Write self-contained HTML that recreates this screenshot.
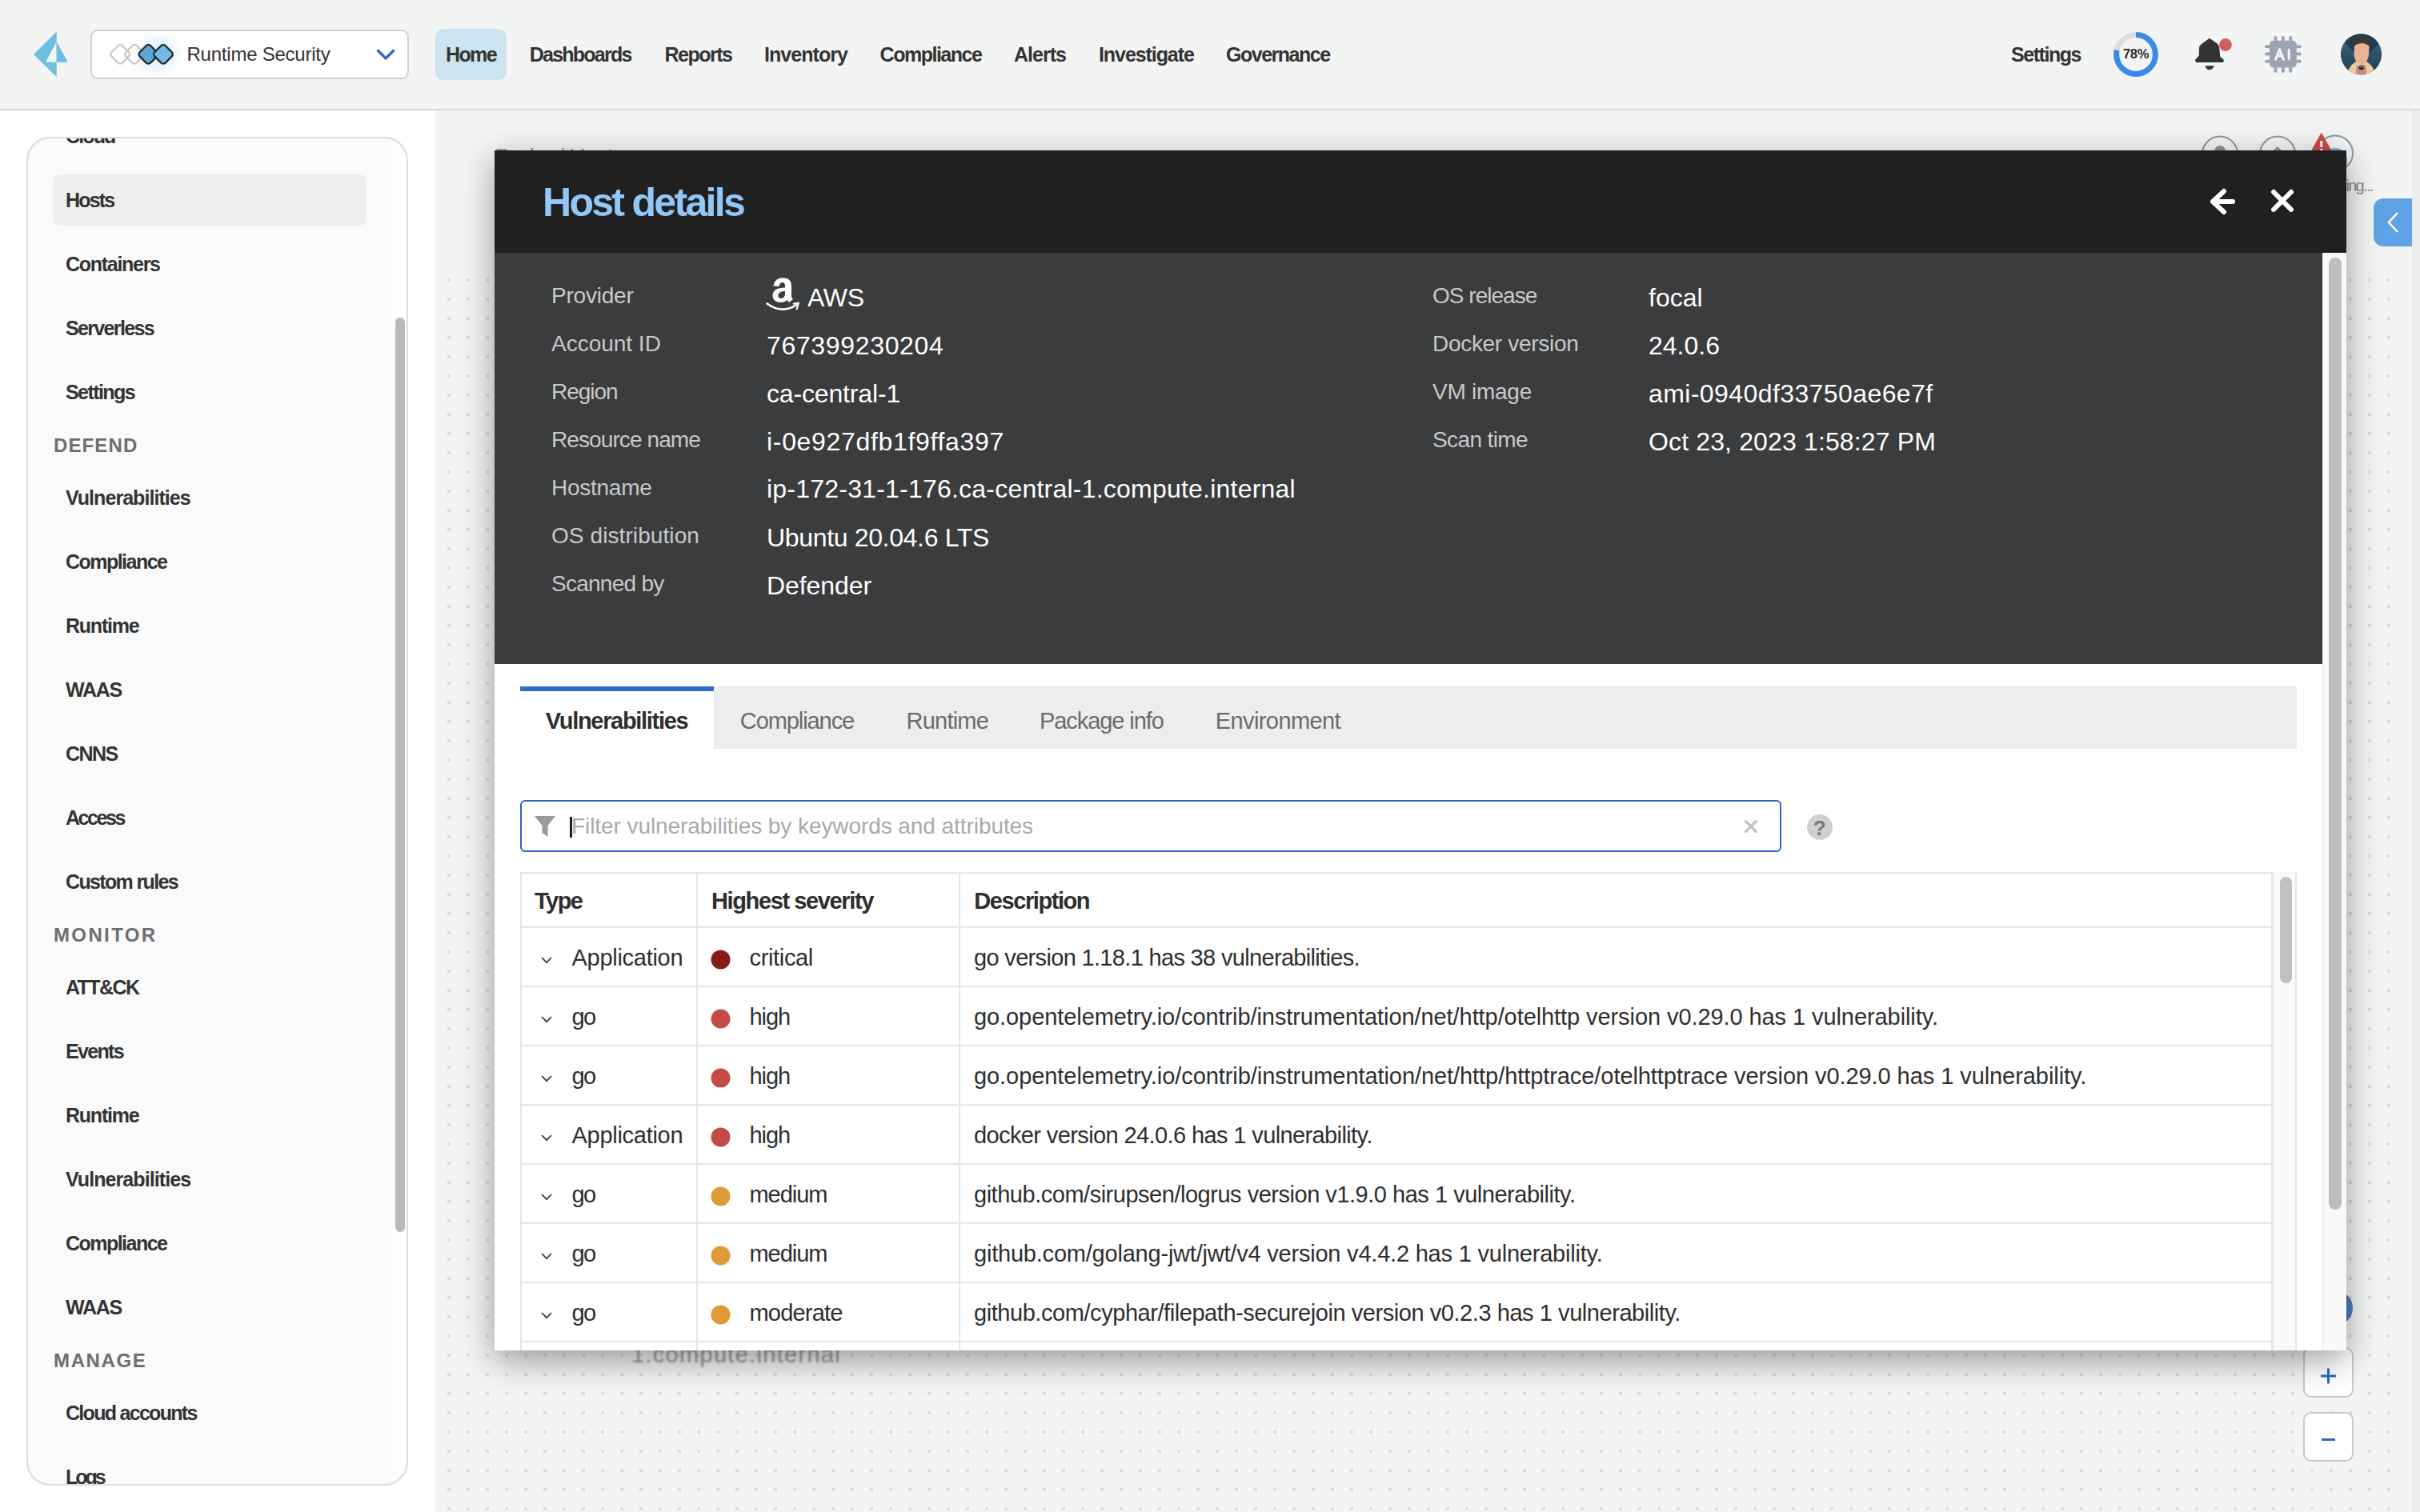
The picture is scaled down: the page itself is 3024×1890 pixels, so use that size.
<!DOCTYPE html>
<html><head><meta charset="utf-8"><title>Host details</title>
<style>
html,body{margin:0;padding:0;}
body{width:3024px;height:1890px;overflow:hidden;position:relative;background:#fff;font-family:"Liberation Sans",sans-serif;}
.a{position:absolute;box-sizing:border-box;}
.t{position:absolute;line-height:1;white-space:nowrap;}
svg{position:absolute;overflow:visible;}
</style></head><body>

<svg style="left:0;top:0" width="3024" height="1890"><defs><pattern id="dots" x="0" y="0" width="24" height="24" patternUnits="userSpaceOnUse"><rect x="7" y="12" width="4" height="4" fill="#dfdcdc"/></pattern></defs><rect x="544" y="138" width="2470" height="1752" fill="#f3f5f5"/><rect x="544" y="340" width="2456" height="1550" fill="url(#dots)"/><rect x="3014" y="138" width="10" height="1752" fill="#ebebeb"/></svg>
<div class="t " style="left:618.0px;top:181.8px;font-size:28px;color:#9c9c9c;letter-spacing:-0.78px;">Radar / Hosts</div>
<div class="t " style="left:789.0px;top:1678.5px;font-size:29px;color:#949494;letter-spacing:1.30px;filter:blur(0.9px);">1.compute.internal</div>
<svg style="left:2740px;top:160px" width="220" height="70"><circle cx="34" cy="32.5" r="22" fill="none" stroke="#8f9699" stroke-width="2"/><circle cx="106" cy="32.5" r="22" fill="none" stroke="#8f9699" stroke-width="2"/><circle cx="178" cy="31.5" r="22" fill="none" stroke="#8f9699" stroke-width="2"/><circle cx="34" cy="29" r="7" fill="#8f9699"/><path d="M100 31 L106 25 L112 31" fill="none" stroke="#8f9699" stroke-width="3"/><circle cx="178" cy="40" r="15" fill="#74aee6"/><path d="M168 34 Q178 24 188 34" fill="none" stroke="#8f9699" stroke-width="2.5"/><polygon points="160.8,7.4 148.3,30 173.3,30" fill="#c94a46" stroke="#c94a46" stroke-width="2" stroke-linejoin="round"/><rect x="159.3" y="16" width="3" height="8" fill="#fff"/><rect x="159.3" y="26" width="3" height="3" fill="#fff"/></svg>
<div class="t " style="left:2931.5px;top:221.6px;font-size:20px;color:#8a8a8a;letter-spacing:-1.73px;">ing...</div>
<div class="a" style="left:2966px;top:248px;width:48px;height:60px;background:#5fa3e6;border-radius:12px 0 0 12px;"></div>
<svg style="left:2966px;top:248px" width="48" height="60"><polyline points="30,18 19,30 30,42" fill="none" stroke="#fff" stroke-width="2.5"/></svg>
<svg style="left:2900px;top:1600px" width="60" height="70"><circle cx="18" cy="35" r="22" fill="#4a7cc4"/></svg>
<div class="a" style="left:2878px;top:1684px;width:63px;height:63px;background:#fff;border:2px solid #c9c9c9;border-radius:10px;"></div>
<div class="a" style="left:2878px;top:1765px;width:63px;height:62px;background:#fff;border:2px solid #c9c9c9;border-radius:10px;"></div>
<svg style="left:2878px;top:1684px" width="63" height="150"><path d="M22 36H41M31.5 26.5V45.5" stroke="#3568c0" stroke-width="3"/><path d="M23 115.5H40" stroke="#3568c0" stroke-width="3"/></svg>
<div class="a" style="left:0px;top:0px;width:3024px;height:138px;background:#f3f5f5;border-bottom:2px solid #d8dada;"></div>
<svg style="left:0;top:0" width="100" height="110"><polygon points="42,68 70.7,39.5 70.7,96.3" fill="#6cbfe0"/><polygon points="57,77.7 70.7,52 70.7,77.7" fill="#f3f5f5"/><polygon points="70.7,52 84.8,77.7 70.7,77.7" fill="#6cbfe0"/></svg>
<div class="a" style="left:113px;top:37px;width:398px;height:62px;background:#fff;border:2px solid #d0d2d2;border-radius:9px;"></div>
<svg style="left:0;top:0" width="240" height="110"><defs><radialGradient id="glow"><stop offset="0" stop-color="#a8d8f4" stop-opacity=".55"/><stop offset="1" stop-color="#9fd3f2" stop-opacity="0"/></radialGradient></defs><ellipse cx="196" cy="68" rx="34" ry="28" fill="url(#glow)"/><rect x="140.7" y="58.3" width="19" height="19" rx="4" transform="rotate(45 150.2 67.8)" fill="none" stroke="#c3c8d0" stroke-width="2.2"/><rect x="158.5" y="58.3" width="19" height="19" rx="4" transform="rotate(45 168 67.8)" fill="none" stroke="#c3c8d0" stroke-width="2.2"/><rect x="175.9" y="58.3" width="19" height="19" rx="4" transform="rotate(45 185.4 67.8)" fill="#5aa6d6" stroke="#1e2226" stroke-width="2.2"/><rect x="194.5" y="58.3" width="19" height="19" rx="4" transform="rotate(45 204 67.8)" fill="#72b9e3" stroke="#1e2226" stroke-width="2.2"/></svg>
<div class="t " style="left:233.5px;top:56.4px;font-size:24px;color:#333;letter-spacing:-0.23px;">Runtime Security</div>
<svg style="left:465px;top:55px" width="34" height="26"><polyline points="6.5,7.5 17,18 27.5,7.5" fill="none" stroke="#2b66c9" stroke-width="3.2"/></svg>
<div class="a" style="left:544px;top:36px;width:89px;height:64px;background:#cde4f0;border-radius:10px;"></div>
<div class="t " style="left:557.0px;top:55.8px;font-size:25px;color:#333;font-weight:700;letter-spacing:-1.61px;">Home</div>
<div class="t " style="left:661.7px;top:55.8px;font-size:25px;color:#333;font-weight:700;letter-spacing:-1.75px;">Dashboards</div>
<div class="t " style="left:830.5px;top:55.8px;font-size:25px;color:#333;font-weight:700;letter-spacing:-1.49px;">Reports</div>
<div class="t " style="left:955.0px;top:55.8px;font-size:25px;color:#333;font-weight:700;letter-spacing:-0.95px;">Inventory</div>
<div class="t " style="left:1099.6px;top:55.8px;font-size:25px;color:#333;font-weight:700;letter-spacing:-1.49px;">Compliance</div>
<div class="t " style="left:1267.0px;top:55.8px;font-size:25px;color:#333;font-weight:700;letter-spacing:-0.98px;">Alerts</div>
<div class="t " style="left:1373.0px;top:55.8px;font-size:25px;color:#333;font-weight:700;letter-spacing:-1.08px;">Investigate</div>
<div class="t " style="left:1532.0px;top:55.8px;font-size:25px;color:#333;font-weight:700;letter-spacing:-1.49px;">Governance</div>
<div class="t " style="left:2513.0px;top:55.8px;font-size:25px;color:#333;font-weight:700;letter-spacing:-1.45px;">Settings</div>
<svg style="left:2639px;top:38px" width="60" height="60"><circle cx="30" cy="30" r="24.4" fill="none" stroke="#dedede" stroke-width="7"/><circle cx="30" cy="30" r="24.4" fill="none" stroke="#3b89e8" stroke-width="7" stroke-dasharray="119.58 153.31" transform="rotate(-90 30 30)"/></svg>
<div class="t " style="left:2653.0px;top:59.1px;font-size:16.5px;color:#2a2a2a;font-weight:700;letter-spacing:-0.34px;">78%</div>
<svg style="left:2735px;top:40px" width="60" height="55"><path d="M25.9 8.2 L14.6 16.7 C13.8 18 13.5 19 13.5 20.4 L13.1 29.8 L8.7 34.6 L9.1 37.5 L42.9 37.5 L43.3 34.9 L38.6 30.2 L37.8 19.7 C37.6 18 37 16.5 36 15.3 Z" fill="#333" stroke="#333" stroke-width="1" stroke-linejoin="round"/><path d="M20.4 42.2 H31.7 C30.5 45.5 28.5 47.3 25.9 47.3 C23.3 47.3 21.5 45.5 20.4 42.2Z" fill="#333"/><circle cx="46" cy="16" r="7.9" fill="#d0605b"/></svg>
<svg style="left:2820px;top:40px" width="66" height="56"><g fill="#9ca4b2"><rect x="16" y="10.7" width="33.8" height="33.9" rx="5"/><rect x="21.5" y="5" width="4" height="7" rx="2"/><rect x="21.5" y="43.5" width="4" height="7.5" rx="2"/><rect x="30.9" y="5" width="4" height="7" rx="2"/><rect x="30.9" y="43.5" width="4" height="7.5" rx="2"/><rect x="40.2" y="5" width="4" height="7" rx="2"/><rect x="40.2" y="43.5" width="4" height="7.5" rx="2"/><rect x="10" y="16.2" width="7" height="4" rx="2"/><rect x="48.8" y="16.2" width="7" height="4" rx="2"/><rect x="10" y="25.5" width="7" height="4" rx="2"/><rect x="48.8" y="25.5" width="7" height="4" rx="2"/><rect x="10" y="34.7" width="7" height="4" rx="2"/><rect x="48.8" y="34.7" width="7" height="4" rx="2"/></g><path d="M23.6 34.3 L28.5 21.8 L33.4 34.3 M25.3 30 H31.7" fill="none" stroke="#f5f6f7" stroke-width="3.1" stroke-linejoin="round" stroke-linecap="round"/><rect x="38.7" y="20.4" width="3.1" height="14.5" rx="1.5" fill="#f5f6f7"/></svg>
<svg style="left:2915px;top:35px" width="70" height="66"><defs><clipPath id="av"><circle cx="35.5" cy="32.8" r="25.6"/></clipPath><linearGradient id="avg" x1="0" y1="0" x2="0" y2="1"><stop offset="0" stop-color="#3f7291"/><stop offset="1" stop-color="#1d3442"/></linearGradient></defs><g clip-path="url(#av)"><rect x="0" y="0" width="70" height="66" fill="url(#avg)"/><polygon points="14.2,17.6 37.4,40.8 57.2,19.8 50,8 36,6 22,9" fill="#1c3341" opacity=".8"/><path d="M27 24 C27 16 31 13.5 36 13.5 C42 13.5 45.5 17 45.5 24 L45 33 C44 41 40 47 35.7 47 C31 47 27.5 41 26.5 33 Z" fill="#e7b596"/><path d="M25.8 24 C26 15 31 12.5 36.5 12.5 C41 12.5 45.5 15 46 23 L43 21 C40 19 34 18.5 29 21 Z" fill="#4a3328"/><path d="M18 60 C19 50 24 44 30 42 L35.7 50 L41.5 42 C47 44 52 50 53.3 60 Z" fill="#eccba3"/><path d="M28 60 L30 46 L35.7 50 L41 46 L43 60 Z" fill="#c68a82"/><path d="M32 47 L35.7 50.5 L39.5 47 L38 52 L33.5 52 Z" fill="#111"/></g></svg>
<div class="a" style="left:33px;top:171px;width:477px;height:1686px;background:#fafafa;border:2px solid #dcdddd;border-radius:30px;overflow:hidden;"></div>
<div class="a" style="left:33px;top:171px;width:477px;height:1685px;border-radius:30px;overflow:hidden;">
<div class="a" style="left:457px;top:0;width:20px;height:1685px;background:#fdfdfd;"></div>
<div class="a" style="left:461px;top:226px;width:12px;height:1143px;background:#b9b9b9;border-radius:6px;"></div>
<div class="a" style="left:33px;top:47px;width:392px;height:64px;background:#efefef;border-radius:8px;"></div>
<div class="t" style="left:49.0px;top:-13.2px;font-size:25px;color:#333;font-weight:700;letter-spacing:-1.86px;">Cloud</div>
<div class="t" style="left:49.0px;top:66.8px;font-size:25px;color:#333;font-weight:700;letter-spacing:-1.81px;">Hosts</div>
<div class="t" style="left:49.0px;top:146.8px;font-size:25px;color:#333;font-weight:700;letter-spacing:-1.29px;">Containers</div>
<div class="t" style="left:49.0px;top:226.8px;font-size:25px;color:#333;font-weight:700;letter-spacing:-1.65px;">Serverless</div>
<div class="t" style="left:49.0px;top:306.8px;font-size:25px;color:#333;font-weight:700;letter-spacing:-1.58px;">Settings</div>
<div class="t" style="left:34.0px;top:373.7px;font-size:24px;color:#6e6e6e;font-weight:700;letter-spacing:1.12px;">DEFEND</div>
<div class="t" style="left:49.0px;top:438.8px;font-size:25px;color:#333;font-weight:700;letter-spacing:-0.95px;">Vulnerabilities</div>
<div class="t" style="left:49.0px;top:518.8px;font-size:25px;color:#333;font-weight:700;letter-spacing:-1.53px;">Compliance</div>
<div class="t" style="left:49.0px;top:598.8px;font-size:25px;color:#333;font-weight:700;letter-spacing:-1.23px;">Runtime</div>
<div class="t" style="left:49.0px;top:678.8px;font-size:25px;color:#333;font-weight:700;letter-spacing:-1.25px;">WAAS</div>
<div class="t" style="left:49.0px;top:758.8px;font-size:25px;color:#333;font-weight:700;letter-spacing:-1.55px;">CNNS</div>
<div class="t" style="left:49.0px;top:838.8px;font-size:25px;color:#333;font-weight:700;letter-spacing:-2.43px;">Access</div>
<div class="t" style="left:49.0px;top:918.8px;font-size:25px;color:#333;font-weight:700;letter-spacing:-1.65px;">Custom rules</div>
<div class="t" style="left:34.0px;top:985.7px;font-size:24px;color:#6e6e6e;font-weight:700;letter-spacing:2.37px;">MONITOR</div>
<div class="t" style="left:49.0px;top:1050.8px;font-size:25px;color:#333;font-weight:700;letter-spacing:-1.58px;">ATT&amp;CK</div>
<div class="t" style="left:49.0px;top:1130.8px;font-size:25px;color:#333;font-weight:700;letter-spacing:-1.66px;">Events</div>
<div class="t" style="left:49.0px;top:1210.8px;font-size:25px;color:#333;font-weight:700;letter-spacing:-1.23px;">Runtime</div>
<div class="t" style="left:49.0px;top:1290.8px;font-size:25px;color:#333;font-weight:700;letter-spacing:-0.92px;">Vulnerabilities</div>
<div class="t" style="left:49.0px;top:1370.8px;font-size:25px;color:#333;font-weight:700;letter-spacing:-1.53px;">Compliance</div>
<div class="t" style="left:49.0px;top:1450.8px;font-size:25px;color:#333;font-weight:700;letter-spacing:-1.25px;">WAAS</div>
<div class="t" style="left:34.0px;top:1517.7px;font-size:24px;color:#6e6e6e;font-weight:700;letter-spacing:1.64px;">MANAGE</div>
<div class="t" style="left:49.0px;top:1582.8px;font-size:25px;color:#333;font-weight:700;letter-spacing:-1.71px;">Cloud accounts</div>
<div class="t" style="left:49.0px;top:1662.8px;font-size:25px;color:#333;font-weight:700;letter-spacing:-3.05px;">Logs</div>
</div>
<div class="a" style="left:33px;top:171px;width:477px;height:1686px;border:2px solid #dcdddd;border-radius:30px;"></div>
<div class="a" style="left:618px;top:188px;width:2314px;height:1500px;background:#fff;box-shadow:0 12px 40px rgba(0,0,0,.38);"></div>
<div class="a" style="left:0;top:0;width:3024px;height:1890px;clip-path:inset(188px 92px 202px 618px);">
<div class="a" style="left:618px;top:188px;width:2314px;height:128px;background:#202020;"></div>
<div class="t " style="left:678.0px;top:227.7px;font-size:50px;color:#92c7f7;font-weight:700;letter-spacing:-2.70px;">Host details</div>
<svg style="left:2755px;top:230px" width="120" height="45"><path d="M24 9 L10 22 L24 35 M10.5 22 H35" fill="none" stroke="#fff" stroke-width="6" stroke-linecap="round" stroke-linejoin="round"/><path d="M86 10 L108 32 M108 10 L86 32" fill="none" stroke="#fff" stroke-width="6" stroke-linecap="round"/></svg>
<div class="a" style="left:618px;top:316px;width:2284px;height:514px;background:#3b3c3e;"></div>
<div class="a" style="left:2902px;top:316px;width:30px;height:1372px;background:#f9f9f9;border-left:1.5px solid #e6e6e6;"></div>
<div class="a" style="left:2910px;top:322px;width:16px;height:1190px;background:#bebebe;border-radius:8px;"></div>
<div class="t " style="left:689.0px;top:356.3px;font-size:28px;color:#c8c8c8;letter-spacing:-0.22px;">Provider</div>
<div class="t " style="left:1009.0px;top:355.9px;font-size:32px;color:#fff;letter-spacing:-0.33px;">AWS</div>
<div class="t " style="left:689.0px;top:416.3px;font-size:28px;color:#c8c8c8;letter-spacing:-0.01px;">Account ID</div>
<div class="t " style="left:958.0px;top:415.9px;font-size:32px;color:#fff;letter-spacing:0.66px;">767399230204</div>
<div class="t " style="left:689.0px;top:476.3px;font-size:28px;color:#c8c8c8;letter-spacing:-1.03px;">Region</div>
<div class="t " style="left:958.0px;top:475.9px;font-size:32px;color:#fff;letter-spacing:-0.16px;">ca-central-1</div>
<div class="t " style="left:689.0px;top:536.3px;font-size:28px;color:#c8c8c8;letter-spacing:-0.90px;">Resource name</div>
<div class="t " style="left:958.0px;top:535.9px;font-size:32px;color:#fff;letter-spacing:0.68px;">i-0e927dfb1f9ffa397</div>
<div class="t " style="left:689.0px;top:596.3px;font-size:28px;color:#c8c8c8;letter-spacing:-0.26px;">Hostname</div>
<div class="t " style="left:958.0px;top:595.4px;font-size:32px;color:#fff;letter-spacing:0.22px;">ip-172-31-1-176.ca-central-1.compute.internal</div>
<div class="t " style="left:689.0px;top:656.3px;font-size:28px;color:#c8c8c8;letter-spacing:0.09px;">OS distribution</div>
<div class="t " style="left:958.0px;top:655.9px;font-size:32px;color:#fff;letter-spacing:-0.34px;">Ubuntu 20.04.6 LTS</div>
<div class="t " style="left:689.0px;top:716.3px;font-size:28px;color:#c8c8c8;letter-spacing:-0.74px;">Scanned by</div>
<div class="t " style="left:958.0px;top:715.9px;font-size:32px;color:#fff;letter-spacing:-0.08px;">Defender</div>
<svg style="left:940px;top:330px" width="70" height="65"><path fill-rule="evenodd" fill="#fff" d="M26.5 27.5 C27.5 20.5 32 17.3 38.5 17.3 C45.5 17.3 49 21 49 27.5 L49 40.5 C49 42 50 43 51 44 L46 48 C45 47 44 46 43.5 45 C41.5 47.2 38.5 48 35.5 48 C29.5 48 25.5 44.5 25.5 39.5 C25.5 33 31 29.5 41 29.5 L41 27.5 C41 24.5 40 23 38 23 C35.5 23 34 24.5 33.5 28 Z M41 34 C34.5 34 32.5 36.5 32.5 39.5 C32.5 42 34 43 36 43 C39.5 43 41 40 41 37 Z"/><path d="M18.5 49.5 Q37 63 55.5 51" fill="none" stroke="#fff" stroke-width="2.6" stroke-linecap="round"/><path d="M51.5 49.8 L58 48.4 L55.6 56.5" fill="none" stroke="#fff" stroke-width="2" stroke-linecap="round" stroke-linejoin="round"/></svg>
<div class="t " style="left:1790.0px;top:356.3px;font-size:28px;color:#c8c8c8;letter-spacing:-0.98px;">OS release</div>
<div class="t " style="left:2060.0px;top:355.9px;font-size:32px;color:#fff;">focal</div>
<div class="t " style="left:1790.0px;top:416.3px;font-size:28px;color:#c8c8c8;letter-spacing:-0.30px;">Docker version</div>
<div class="t " style="left:2060.0px;top:415.9px;font-size:32px;color:#fff;">24.0.6</div>
<div class="t " style="left:1790.0px;top:476.3px;font-size:28px;color:#c8c8c8;letter-spacing:-0.26px;">VM image</div>
<div class="t " style="left:2060.0px;top:475.9px;font-size:32px;color:#fff;letter-spacing:0.41px;">ami-0940df33750ae6e7f</div>
<div class="t " style="left:1790.0px;top:536.3px;font-size:28px;color:#c8c8c8;letter-spacing:-0.61px;">Scan time</div>
<div class="t " style="left:2060.0px;top:536.4px;font-size:32px;color:#fff;letter-spacing:0.14px;">Oct 23, 2023 1:58:27 PM</div>
<div class="a" style="left:650px;top:858px;width:2220px;height:78px;background:#ededed;"></div>
<div class="a" style="left:650px;top:858px;width:242px;height:78px;background:#fff;border-top:6px solid #2f6fc9;"></div>
<div class="t " style="left:681.8px;top:886.5px;font-size:29px;color:#2e2e2e;font-weight:700;letter-spacing:-1.31px;">Vulnerabilities</div>
<div class="t " style="left:924.8px;top:886.5px;font-size:29px;color:#6b6b6b;letter-spacing:-1.08px;">Compliance</div>
<div class="t " style="left:1132.5px;top:886.5px;font-size:29px;color:#6b6b6b;letter-spacing:-0.77px;">Runtime</div>
<div class="t " style="left:1299.0px;top:886.5px;font-size:29px;color:#6b6b6b;letter-spacing:-1.08px;">Package info</div>
<div class="t " style="left:1518.8px;top:886.5px;font-size:29px;color:#6b6b6b;letter-spacing:-0.60px;">Environment</div>
<div class="a" style="left:650px;top:1000px;width:1576px;height:65px;background:#fff;border:2.5px solid #2c63c6;border-radius:6px;"></div>
<svg style="left:660px;top:1010px" width="45" height="45"><path d="M8 10 H34 L24.5 22 V36 L17.5 31 V22 Z" fill="#9a9a9a"/></svg>
<div class="a" style="left:712px;top:1021px;width:2.5px;height:26px;background:#222;"></div>
<div class="t " style="left:714.0px;top:1019.3px;font-size:28px;color:#a9a9a9;letter-spacing:-0.07px;">Filter vulnerabilities by keywords and attributes</div>
<svg style="left:2170px;top:1015px" width="35" height="35"><path d="M11.6 11.8 L24.1 24.2 M24.1 11.8 L11.6 24.2" stroke="#c4c4c4" stroke-width="3.6" stroke-linecap="round"/></svg>
<svg style="left:2250px;top:1010px" width="50" height="50"><circle cx="24" cy="24" r="16" fill="#d0d0d0"/></svg>
<div class="t " style="left:2265.8px;top:1021.6px;font-size:26px;color:#777;font-weight:700;">?</div>
<div class="a" style="left:650px;top:1090px;width:2220px;height:620px;border:2px solid #e6e6e6;border-right:1.5px solid #e6e6e6;"></div>
<div class="a" style="left:2838px;top:1090px;width:31px;height:620px;background:#f9f9f9;border-left:3.5px solid #e6e6e6;border-right:1.5px solid #e6e6e6;"></div>
<div class="a" style="left:2849px;top:1096px;width:15px;height:133px;background:#c1c1c1;border-radius:8px;"></div>
<div class="a" style="left:870px;top:1090px;width:2px;height:620px;background:#e6e6e6;"></div>
<div class="a" style="left:1198px;top:1090px;width:2px;height:620px;background:#e6e6e6;"></div>
<div class="a" style="left:650px;top:1158px;width:2188px;height:2px;background:#e6e6e6;"></div>
<div class="a" style="left:650px;top:1232px;width:2188px;height:2px;background:#e6e6e6;"></div>
<div class="a" style="left:650px;top:1306px;width:2188px;height:2px;background:#e6e6e6;"></div>
<div class="a" style="left:650px;top:1380px;width:2188px;height:2px;background:#e6e6e6;"></div>
<div class="a" style="left:650px;top:1454px;width:2188px;height:2px;background:#e6e6e6;"></div>
<div class="a" style="left:650px;top:1528px;width:2188px;height:2px;background:#e6e6e6;"></div>
<div class="a" style="left:650px;top:1602px;width:2188px;height:2px;background:#e6e6e6;"></div>
<div class="a" style="left:650px;top:1676px;width:2188px;height:2px;background:#e6e6e6;"></div>
<div class="a" style="left:650px;top:1750px;width:2188px;height:2px;background:#e6e6e6;"></div>
<div class="t " style="left:668.0px;top:1111.5px;font-size:29px;color:#2e2e2e;font-weight:700;letter-spacing:-1.51px;">Type</div>
<div class="t " style="left:889.0px;top:1111.5px;font-size:29px;color:#2e2e2e;font-weight:700;letter-spacing:-1.38px;">Highest severity</div>
<div class="t " style="left:1217.3px;top:1111.5px;font-size:29px;color:#2e2e2e;font-weight:700;letter-spacing:-1.43px;">Description</div>
<div class="t " style="left:714.5px;top:1182.5px;font-size:29px;color:#2e2e2e;letter-spacing:-0.28px;">Application</div>
<div class="t " style="left:936.5px;top:1182.5px;font-size:29px;color:#2e2e2e;letter-spacing:-0.34px;">critical</div>
<div class="t " style="left:1217.0px;top:1182.5px;font-size:29px;color:#2e2e2e;letter-spacing:-0.67px;">go version 1.18.1 has 38 vulnerabilities.</div>
<div class="t " style="left:714.5px;top:1256.5px;font-size:29px;color:#2e2e2e;letter-spacing:-1.57px;">go</div>
<div class="t " style="left:936.5px;top:1256.5px;font-size:29px;color:#2e2e2e;letter-spacing:-1.05px;">high</div>
<div class="t " style="left:1217.0px;top:1256.5px;font-size:29px;color:#2e2e2e;letter-spacing:-0.08px;">go.opentelemetry.io/contrib/instrumentation/net/http/otelhttp version v0.29.0 has 1 vulnerability.</div>
<div class="t " style="left:714.5px;top:1330.5px;font-size:29px;color:#2e2e2e;letter-spacing:-1.57px;">go</div>
<div class="t " style="left:936.5px;top:1330.5px;font-size:29px;color:#2e2e2e;letter-spacing:-1.05px;">high</div>
<div class="t " style="left:1217.0px;top:1330.5px;font-size:29px;color:#2e2e2e;letter-spacing:-0.07px;">go.opentelemetry.io/contrib/instrumentation/net/http/httptrace/otelhttptrace version v0.29.0 has 1 vulnerability.</div>
<div class="t " style="left:714.5px;top:1404.5px;font-size:29px;color:#2e2e2e;letter-spacing:-0.28px;">Application</div>
<div class="t " style="left:936.5px;top:1404.5px;font-size:29px;color:#2e2e2e;letter-spacing:-1.05px;">high</div>
<div class="t " style="left:1217.0px;top:1404.5px;font-size:29px;color:#2e2e2e;letter-spacing:-0.61px;">docker version 24.0.6 has 1 vulnerability.</div>
<div class="t " style="left:714.5px;top:1478.5px;font-size:29px;color:#2e2e2e;letter-spacing:-1.57px;">go</div>
<div class="t " style="left:936.5px;top:1478.5px;font-size:29px;color:#2e2e2e;letter-spacing:-1.04px;">medium</div>
<div class="t " style="left:1217.0px;top:1478.5px;font-size:29px;color:#2e2e2e;letter-spacing:-0.48px;">github.com/sirupsen/logrus version v1.9.0 has 1 vulnerability.</div>
<div class="t " style="left:714.5px;top:1552.5px;font-size:29px;color:#2e2e2e;letter-spacing:-1.57px;">go</div>
<div class="t " style="left:936.5px;top:1552.5px;font-size:29px;color:#2e2e2e;letter-spacing:-1.04px;">medium</div>
<div class="t " style="left:1217.0px;top:1552.5px;font-size:29px;color:#2e2e2e;letter-spacing:-0.21px;">github.com/golang-jwt/jwt/v4 version v4.4.2 has 1 vulnerability.</div>
<div class="t " style="left:714.5px;top:1626.5px;font-size:29px;color:#2e2e2e;letter-spacing:-1.57px;">go</div>
<div class="t " style="left:936.5px;top:1626.5px;font-size:29px;color:#2e2e2e;letter-spacing:-0.81px;">moderate</div>
<div class="t " style="left:1217.0px;top:1626.5px;font-size:29px;color:#2e2e2e;letter-spacing:-0.44px;">github.com/cyphar/filepath-securejoin version v0.2.3 has 1 vulnerability.</div>
<svg style="left:0;top:0" width="3024" height="1890"><circle cx="900.5" cy="1199.6" r="12" fill="#8a1a1a"/><polyline points="677,1197 683,1203.2 689,1197" fill="none" stroke="#333" stroke-width="1.7"/><circle cx="900.5" cy="1273.6" r="12" fill="#c44a45"/><polyline points="677,1271 683,1277.2 689,1271" fill="none" stroke="#333" stroke-width="1.7"/><circle cx="900.5" cy="1347.6" r="12" fill="#c44a45"/><polyline points="677,1345 683,1351.2 689,1345" fill="none" stroke="#333" stroke-width="1.7"/><circle cx="900.5" cy="1421.6" r="12" fill="#c44a45"/><polyline points="677,1419 683,1425.2 689,1419" fill="none" stroke="#333" stroke-width="1.7"/><circle cx="900.5" cy="1495.6" r="12" fill="#e09a36"/><polyline points="677,1493 683,1499.2 689,1493" fill="none" stroke="#333" stroke-width="1.7"/><circle cx="900.5" cy="1569.6" r="12" fill="#e09a36"/><polyline points="677,1567 683,1573.2 689,1567" fill="none" stroke="#333" stroke-width="1.7"/><circle cx="900.5" cy="1643.6" r="12" fill="#e09a36"/><polyline points="677,1641 683,1647.2 689,1641" fill="none" stroke="#333" stroke-width="1.7"/></svg>
</div>
</body></html>
